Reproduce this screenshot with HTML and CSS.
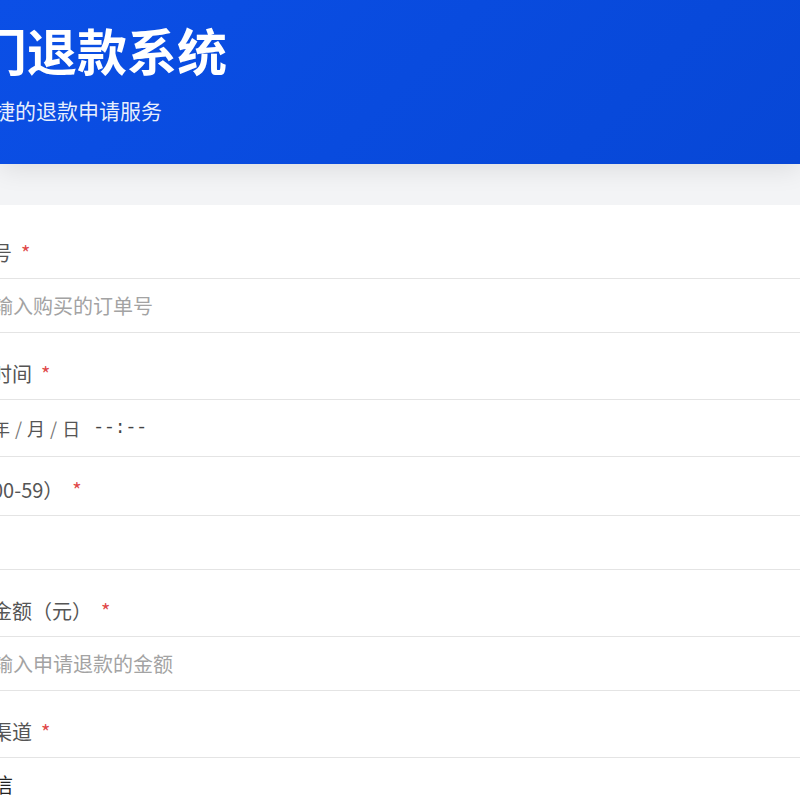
FILE: index.html
```html
<!DOCTYPE html>
<html lang="zh-CN">
<head>
    <meta charset="UTF-8">
    <meta name="viewport" content="width=device-width, initial-scale=1.0">
    <title>部门退款系统</title>
    <link rel="stylesheet" href="styles.css">
</head>
<body>
    <header class="hero">
        <div class="hero-inner">
            <h1 class="hero-title">部门退款系统</h1>
            <p class="hero-subtitle">提供便捷的退款申请服务</p>
        </div>
    </header>

    <main class="main">
        <form class="card" onsubmit="return false;">
            <div class="form-group">
                <label class="form-label" for="orderNo">订单号<span class="required">*</span></label>
                <input class="form-control" id="orderNo" type="text" placeholder="请输入购买的订单号">
            </div>

            <div class="form-group form-group-date">
                <label class="form-label">购买时间<span class="required">*</span></label>
                <div class="form-control date-control">
                    <span class="dt-part">年</span><span class="dt-sep">/</span><span class="dt-part">月</span><span class="dt-sep">/</span><span class="dt-part">日</span><span class="dt-time">--:--</span>
                </div>
            </div>

            <div class="form-group">
                <label class="form-label" for="seconds">秒（00-59）<span class="required">*</span></label>
                <input class="form-control" id="seconds" type="text">
            </div>

            <div class="form-group">
                <label class="form-label" for="amount">退款金额（元）<span class="required">*</span></label>
                <input class="form-control" id="amount" type="text" placeholder="请输入申请退款的金额">
            </div>

            <div class="form-group">
                <label class="form-label" for="channel">支付渠道<span class="required">*</span></label>
                <select class="form-control select-control" id="channel">
                    <option>微信</option>
                    <option>支付宝</option>
                    <option>银行卡</option>
                </select>
            </div>
        </form>
    </main>
</body>
</html>
```

FILE: styles.css
```css
* {
    margin: 0;
    padding: 0;
    box-sizing: border-box;
}

body {
    font-family: "Noto Sans CJK SC", "Noto Sans", sans-serif;
    background: #f3f4f6;
    overflow: hidden;
}

.hero {
    height: 164px;
    background: linear-gradient(135deg, #0b4fe6 0%, #0747d6 100%);
    box-shadow: 0 6px 24px rgba(0, 0, 0, 0.09);
    position: relative;
    color: #fff;
}

.hero-inner {
    margin-left: -73px;
    padding-top: 19px;
}

.hero-title {
    font-size: 50px;
    font-weight: 700;
    line-height: 1.2;
}

.hero-subtitle {
    margin-top: 16px;
    margin-left: 4px;
    font-size: 21px;
    line-height: 1.5;
    color: rgba(255, 255, 255, 0.92);
}

.main {
    padding-top: 41px;
}

.card {
    margin-left: -78px;
    width: 1000px;
    padding: 33px 30px;
    background: #fff;
    border-radius: 16px;
}

.form-group {
    margin-bottom: 26px;
}

.form-group-date {
    margin-bottom: 18px;
}

.form-label {
    display: block;
    font-size: 20px;
    line-height: 30px;
    font-weight: 400;
    color: #555;
    margin-bottom: 10px;
}

.required {
    color: #e04848;
    margin-left: 9px;
}

.form-control {
    display: block;
    width: 100%;
    height: 55px;
    padding: 0 20px;
    font-family: inherit;
    font-size: 20px;
    color: #222;
    background: #fff;
    border: 1.5px solid #e4e4e4;
    border-radius: 10px;
    outline: none;
}

.form-control::placeholder {
    color: #a3a3a3;
}

.date-control {
    height: 58px;
    display: flex;
    align-items: center;
    padding-left: 39px;
    font-size: 18px;
    color: #555;
}

.dt-sep {
    margin: 0 5px;
    color: #777;
}

.dt-time {
    margin-left: 13px;
    font-family: "Liberation Mono", monospace;
    color: #444;
}

.select-control {
    appearance: none;
    -webkit-appearance: none;
}
```
